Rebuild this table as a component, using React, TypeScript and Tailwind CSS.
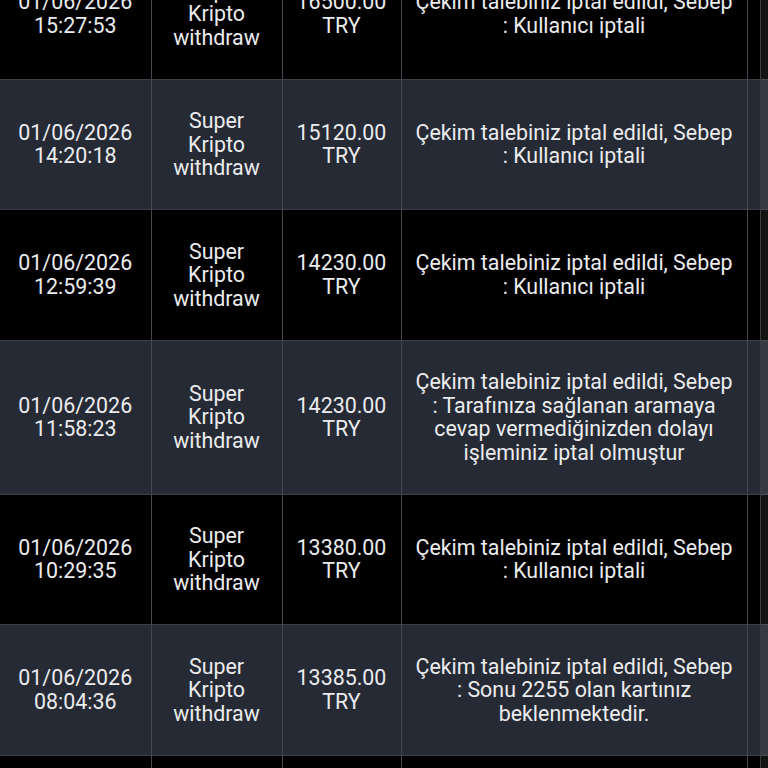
const rows = [
  {
    date: "01/06/2026",
    time: "15:27:53",
    amount: "16500.00",
    note: ["Çekim talebiniz iptal edildi, Sebep", ": Kullanıcı iptali"],
  },
  {
    date: "01/06/2026",
    time: "14:20:18",
    amount: "15120.00",
    note: ["Çekim talebiniz iptal edildi, Sebep", ": Kullanıcı iptali"],
  },
  {
    date: "01/06/2026",
    time: "12:59:39",
    amount: "14230.00",
    note: ["Çekim talebiniz iptal edildi, Sebep", ": Kullanıcı iptali"],
  },
  {
    date: "01/06/2026",
    time: "11:58:23",
    amount: "14230.00",
    note: [
      "Çekim talebiniz iptal edildi, Sebep",
      ": Tarafınıza sağlanan aramaya",
      "cevap vermediğinizden dolayı",
      "işleminiz iptal olmuştur",
    ],
  },
  {
    date: "01/06/2026",
    time: "10:29:35",
    amount: "13380.00",
    note: ["Çekim talebiniz iptal edildi, Sebep", ": Kullanıcı iptali"],
  },
  {
    date: "01/06/2026",
    time: "08:04:36",
    amount: "13385.00",
    note: [
      "Çekim talebiniz iptal edildi, Sebep",
      ": Sonu 2255 olan kartınız",
      "beklenmektedir.",
    ],
  },
  {
    date: "01/06/2026",
    time: "07:41:12",
    amount: "13385.00",
    note: ["Çekim talebiniz iptal edildi, Sebep", ": Kullanıcı iptali"],
  },
];

const cell =
  "border-r border-[#45484f] py-[29.5px] px-1 text-center align-middle";

export default function App() {
  return (
    <div className="relative h-screen overflow-hidden bg-black font-['Roboto',sans-serif] text-[21.4px] leading-[23.5px] text-[#ebecee]">
      <table className="-mt-[51px] w-[768px] table-fixed border-collapse">
        <colgroup>
          <col className="w-[151px]" />
          <col className="w-[131px]" />
          <col className="w-[119px]" />
          <col className="w-[346px]" />
          <col className="w-[21px]" />
        </colgroup>
        <tbody>
          {rows.map((r, i) => (
            <tr
              key={i}
              className={
                i % 2 === 1
                  ? "border-b border-[#3e4048] bg-[#262a34]"
                  : "border-b border-[#3e4048] bg-black"
              }
            >
              <td className={cell}>
                <div>{r.date}</div>
                <div>{r.time}</div>
              </td>
              <td className={cell}>
                <div>Super</div>
                <div>Kripto</div>
                <div>withdraw</div>
              </td>
              <td className={cell}>
                <div>{r.amount}</div>
                <div>TRY</div>
              </td>
              <td className={cell}>
                {r.note.map((n) => (
                  <div key={n} className="whitespace-nowrap">
                    {n}
                  </div>
                ))}
              </td>
              <td />
            </tr>
          ))}
        </tbody>
      </table>
      {/* scrollbar strip */}
      <div className="absolute right-0 top-0 h-full w-[8px] border-l border-[#3a3c42] bg-white/[0.08]" />
    </div>
  );
}
